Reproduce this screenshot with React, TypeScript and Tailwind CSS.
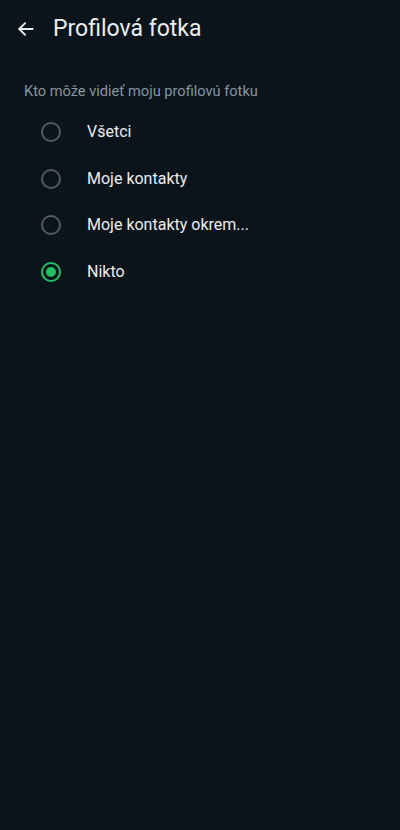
import React, { useState } from 'react';

const options = ['Všetci', 'Moje kontakty', 'Moje kontakty okrem...', 'Nikto'];

export default function App() {
  const [selected, setSelected] = useState(3);

  return (
    <div className="min-h-screen w-full bg-[#0b141b] text-[#e9edef]" style={{ fontFamily: 'Roboto, "Noto Sans", sans-serif' }}>
      <header className="h-[58px] flex items-center pl-4">
        <svg width="20" height="20" viewBox="0 0 24 24" fill="none" stroke="#e9edef" strokeWidth="2.2" strokeLinecap="round" strokeLinejoin="round">
          <path d="M20 12H4" />
          <path d="M11 5l-7 7 7 7" />
        </svg>
        <h1 className="ml-[17px] text-[23px] font-normal">Profilová fotka</h1>
      </header>

      <p className="mt-[23px] px-6 text-[14.6px] leading-5 text-[#8696a0]">Kto môže vidieť moju profilovú fotku</p>

      <div className="mt-[8px]">
        {options.map((label, i) => (
          <button
            key={label}
            onClick={() => setSelected(i)}
            className="w-full h-[46.5px] flex items-center pl-[41px] text-left"
          >
            <span
              className={`w-5 h-5 rounded-full border-2 flex items-center justify-center ${
                selected === i ? 'border-[#21c063]' : 'border-[#4f5b62]'
              }`}
            >
              {selected === i && <span className="w-[10px] h-[10px] rounded-full bg-[#21c063]" />}
            </span>
            <span className="ml-[26px] text-[16px]">{label}</span>
          </button>
        ))}
      </div>
    </div>
  );
}
